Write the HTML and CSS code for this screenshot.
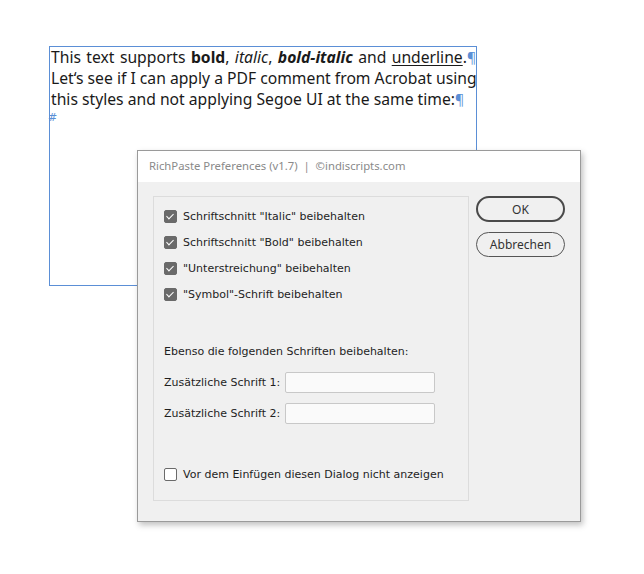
FILE: index.html
```html
<!DOCTYPE html>
<html lang="de">
<head>
    <meta charset="UTF-8">
    <title>RichPaste Preferences</title>
    <link rel="stylesheet" href="styles.css">
</head>
<body>
    <div class="page">
        <div class="text-frame">
            <p class="story"><span class="line-wide">This text supports <b>bold</b>, <i>italic</i>, <b><i>bold-italic</i></b> and <u>underline</u>.</span><span class="mark">¶</span><br>Let‘s see if I can apply a PDF comment from Acrobat using<br>this styles and not applying Segoe UI at the same time:<span class="mark">¶</span></p>
            <span class="story-end">#</span>
        </div>

        <div class="dialog">
            <div class="dialog-title">RichPaste Preferences (v1.7) &nbsp;|&nbsp; ©indiscripts.com</div>
            <div class="dialog-body">
                <div class="panel">
                    <label class="check"><span class="box checked"></span>Schriftschnitt "Italic" beibehalten</label>
                    <label class="check"><span class="box checked"></span>Schriftschnitt "Bold" beibehalten</label>
                    <label class="check"><span class="box checked"></span>"Unterstreichung" beibehalten</label>
                    <label class="check"><span class="box checked"></span>"Symbol"-Schrift beibehalten</label>

                    <div class="fonts">
                        <div class="fonts-title">Ebenso die folgenden Schriften beibehalten:</div>
                        <div class="field"><span>Zusätzliche Schrift 1:</span><div class="input"></div></div>
                        <div class="field"><span>Zusätzliche Schrift 2:</span><div class="input"></div></div>
                    </div>

                    <label class="check last"><span class="box"></span>Vor dem Einfügen diesen Dialog nicht anzeigen</label>
                </div>
                <div class="buttons">
                    <button class="btn default">OK</button>
                    <button class="btn">Abbrechen</button>
                </div>
            </div>
        </div>
    </div>
</body>
</html>
```

FILE: styles.css
```css
body {
    margin: 0;
    background: #ffffff;
    font-family: 'DejaVu Sans', sans-serif;
}

.page {
    position: relative;
    width: 644px;
    height: 574px;
    padding: 46px 0 0 49px;
    box-sizing: border-box;
}

.text-frame {
    width: 428px;
    height: 240px;
    border: 1px solid #5b8fd6;
    box-sizing: border-box;
    padding: 0 0 0 1px;
}

.story {
    margin: 0;
    font-family: 'Noto Sans', sans-serif;
    font-size: 15.7px;
    line-height: 21px;
    color: #1a1a1a;
    white-space: nowrap;
}

.line-wide {
    word-spacing: 1.3px;
}

.story u {
    text-decoration-thickness: 1px;
    text-underline-offset: 2px;
}

.mark {
    color: #5b8fd6;
    font-size: 14px;
}

.story-end {
    display: block;
    margin: 2px 0 0 -3px;
    color: #5b8fd6;
    font-size: 11px;
    line-height: 12px;
}

.dialog {
    position: absolute;
    left: 137px;
    top: 150px;
    width: 444px;
    height: 372px;
    border: 1px solid #9a9a9a;
    box-sizing: border-box;
    background: #f0f0f0;
    box-shadow: 2px 3px 6px rgba(0, 0, 0, 0.25);
    display: flex;
    flex-direction: column;
}

.dialog-title {
    height: 31px;
    background: #ffffff;
    color: #8a8a8a;
    font-family: 'Noto Sans', sans-serif;
    font-size: 11.3px;
    line-height: 30px;
    padding-left: 11px;
}

.dialog-body {
    display: flex;
    padding: 14px 0 0 15px;
    gap: 7px;
}

.panel {
    width: 316px;
    height: 305px;
    box-sizing: border-box;
    border: 1px solid #dcdcdc;
    padding: 6px 0 0 10px;
    display: flex;
    flex-direction: column;
    font-size: 11px;
    color: #1e1e1e;
}

.check {
    display: flex;
    align-items: center;
    height: 26px;
}

.box {
    width: 11px;
    height: 11px;
    border: 1px solid #6a6a6a;
    border-radius: 2px;
    background: #ffffff;
    margin-right: 6px;
    position: relative;
}

.box.checked {
    background: #6a6a6a;
}

.box.checked::after {
    content: "";
    position: absolute;
    left: 3px;
    top: 1px;
    width: 3px;
    height: 6px;
    border: solid #ffffff;
    border-width: 0 1.5px 1.5px 0;
    transform: rotate(45deg);
}

.fonts {
    margin-top: 35px;
}

.fonts-title {
    height: 20px;
    line-height: 20px;
}

.field {
    display: flex;
    align-items: center;
    gap: 5px;
    margin-top: 10px;
    height: 21px;
}

.input {
    width: 148px;
    height: 19px;
    background: #fafafa;
    border: 1px solid #c8c8c8;
    border-radius: 2px;
}

.check.last {
    margin-top: 37px;
}

.buttons {
    display: flex;
    flex-direction: column;
    gap: 10px;
}

.btn {
    width: 89px;
    height: 25px;
    border: 1px solid #555555;
    border-radius: 13px;
    background: #f0f0f0;
    font-family: 'Noto Sans', sans-serif;
    font-size: 12px;
    color: #333333;
    padding: 0;
}

.btn.default {
    border: 2px solid #4a4a4a;
    height: 26px;
}
```
